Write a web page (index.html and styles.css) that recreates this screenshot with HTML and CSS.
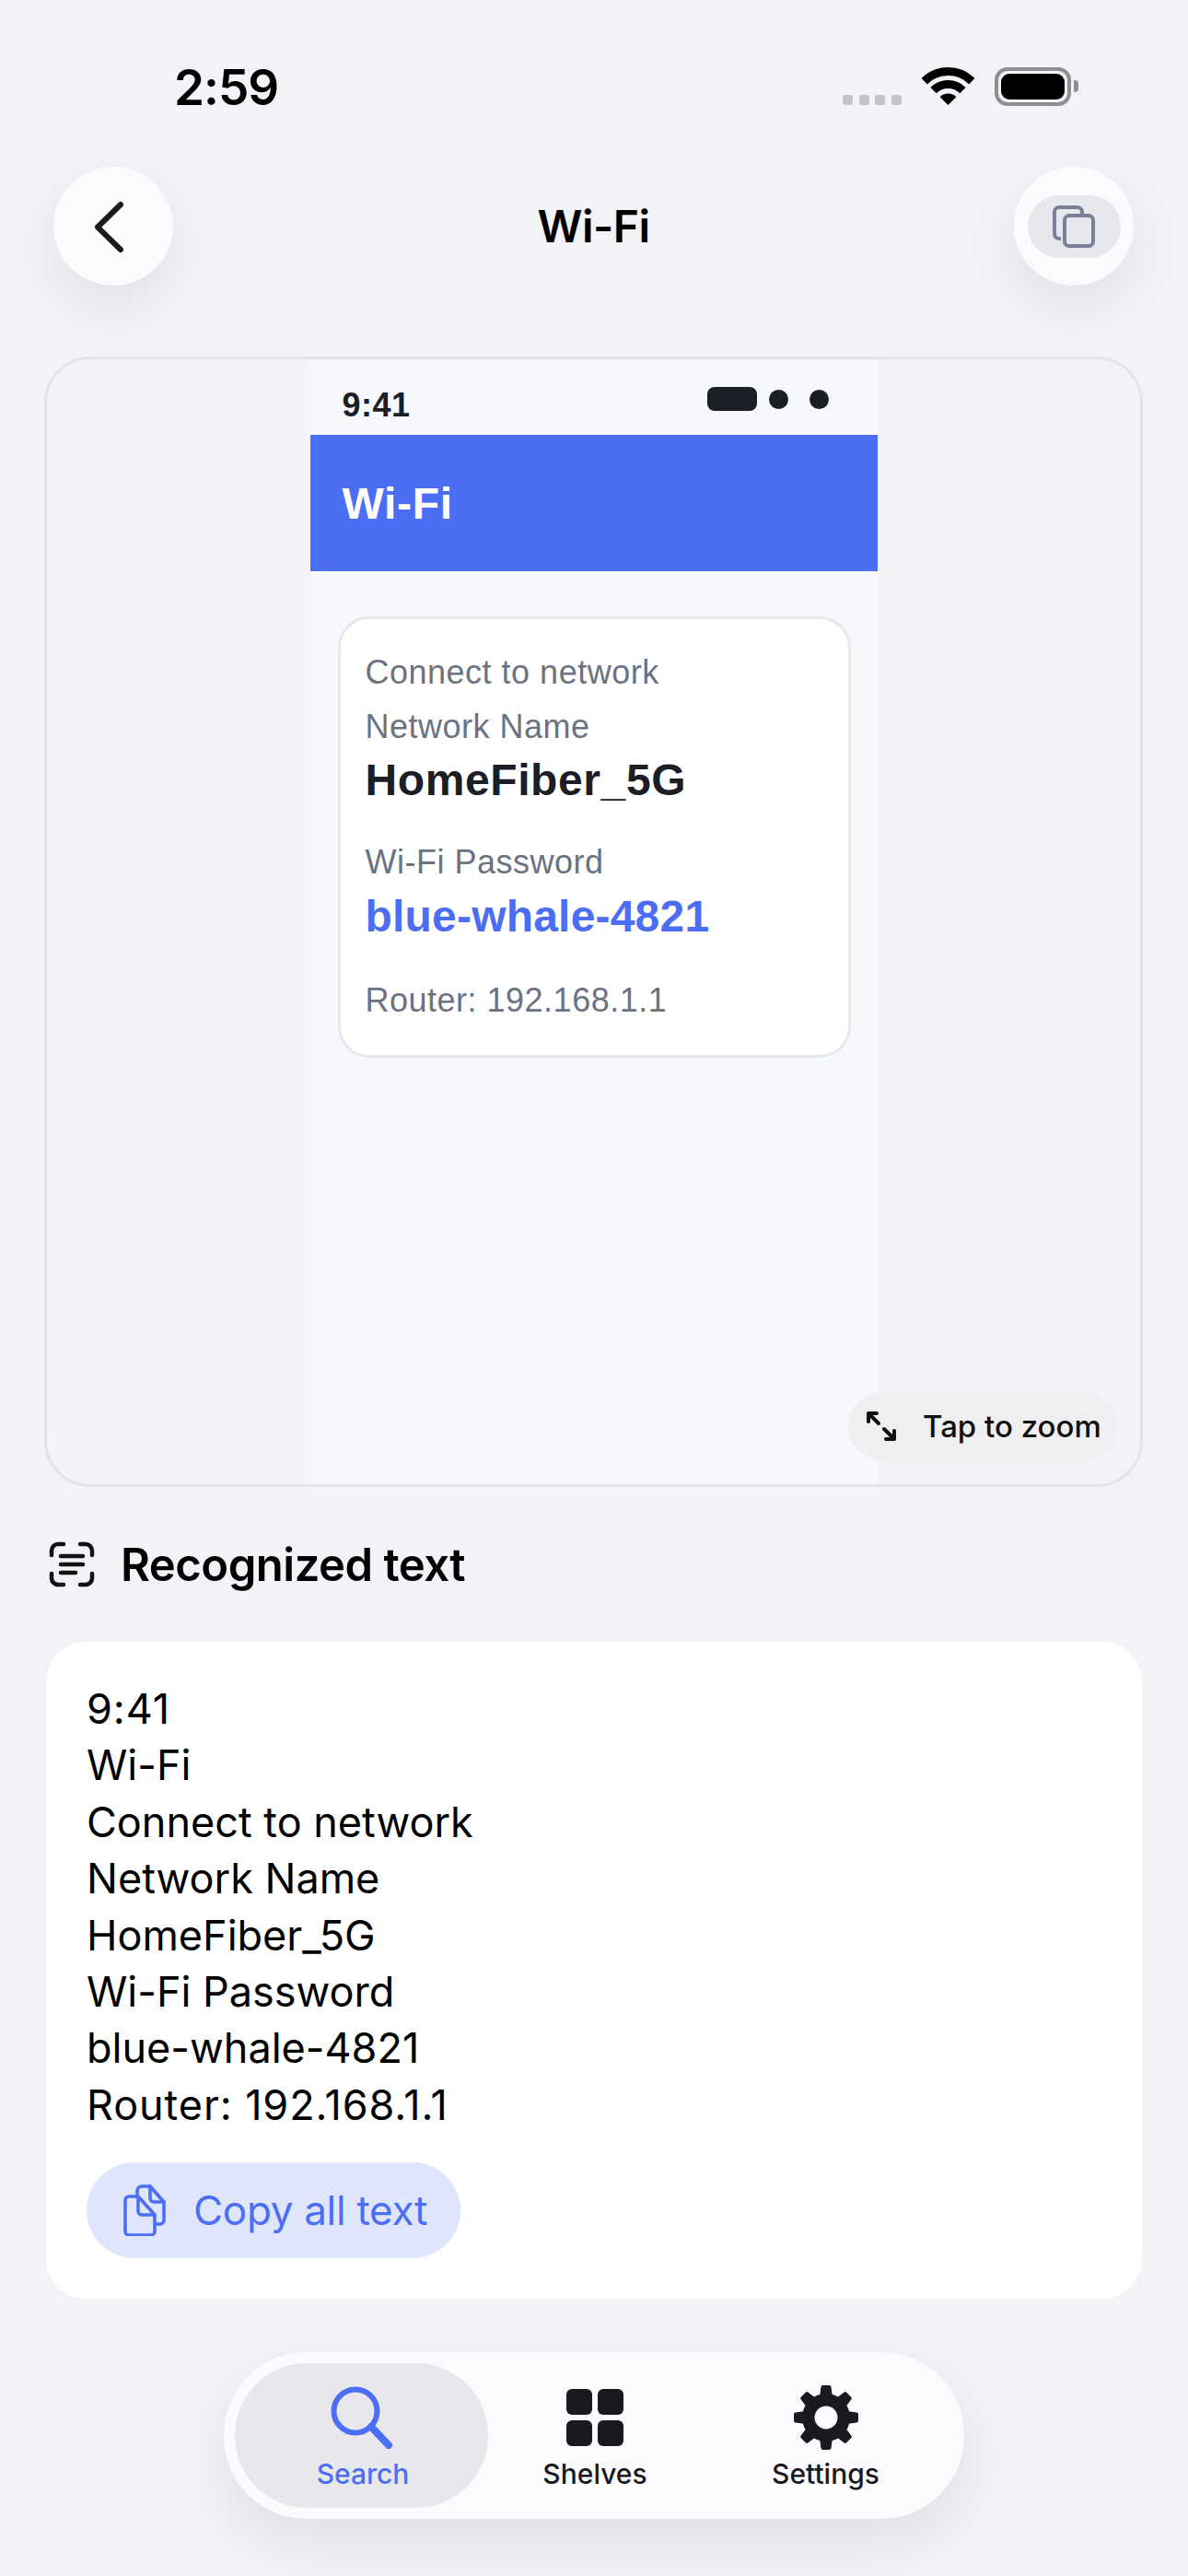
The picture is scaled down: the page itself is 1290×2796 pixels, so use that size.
FILE: index.html
```html
<!DOCTYPE html>
<html lang="en">
<head>
  <meta charset="UTF-8" />
  <title>Wi-Fi</title>
  <link rel="stylesheet" href="styles.css">
</head>
<body>
<div class="page">

  <div class="statusBar">
    <span class="clock">2:59</span>
    <div class="statusIcons">
      <div class="signal"><i></i><i></i><i></i><i></i></div>
      <svg class="wifi" width="57" height="41" viewBox="0 0 57 41">
        <path d="M2.7 15.2A36.5 36.5 0 0 1 54.3 15.2" fill="none" stroke="#000" stroke-width="9"/>
        <path d="M12.6 25.1A22.5 22.5 0 0 1 44.4 25.1" fill="none" stroke="#000" stroke-width="9"/>
        <path d="M28.5 41L19.66 32.16A12.5 12.5 0 0 1 37.34 32.16Z" fill="#000"/>
      </svg>
      <div class="battery"><div class="batteryFill"></div></div>
      <div class="batteryCap"></div>
    </div>
  </div>

  <div class="navBar">
    <button class="roundBtn">
      <svg width="130" height="129" viewBox="0 0 130 129">
        <path d="M73 41L48 65.5L73 90" fill="none" stroke="#1c1c1e" stroke-width="6" stroke-linecap="round" stroke-linejoin="round"/>
      </svg>
    </button>
    <h1 class="navTitle">Wi-Fi</h1>
    <button class="roundBtn">
      <span class="copyPill">
        <svg width="46" height="46" viewBox="0 0 46 46" fill="none" stroke="#7b8098" stroke-width="4">
          <path d="M9 36H7a5 5 0 0 1-5-5V7a5 5 0 0 1 5-5h20a5 5 0 0 1 5 5v3"/>
          <rect x="13" y="11" width="31" height="33" rx="5"/>
        </svg>
      </span>
    </button>
  </div>

  <div class="preview">
    <div class="shot">
      <div class="shotStatus">
        <span class="shotClock">9:41</span>
        <div class="shotIcons"><i class="shotPill"></i><i class="shotDot"></i><i class="shotDot shotDotLast"></i></div>
      </div>
      <div class="shotHeader">Wi-Fi</div>
      <div class="shotCard">
        <div class="shotLabel">Connect to network</div>
        <div class="shotLabel lblName">Network Name</div>
        <div class="shotValue valName">HomeFiber_5G</div>
        <div class="shotLabel lblPass">Wi-Fi Password</div>
        <div class="shotValue valPass">blue-whale-4821</div>
        <div class="shotLabel lblRouter">Router: 192.168.1.1</div>
      </div>
    </div>
    <div class="zoomChip">
      <svg width="34" height="34" viewBox="0 0 34 34" fill="none" stroke="#111" stroke-width="4" stroke-linecap="round" stroke-linejoin="round">
        <path d="M3 12V3H12M3 3L14 14"/>
        <path d="M31 22V31H22M31 31L20 20"/>
      </svg>
      <span>Tap to zoom</span>
    </div>
  </div>

  <div class="sectionHead">
    <svg width="50" height="50" viewBox="0 0 50 50" fill="none" stroke="#111" stroke-width="4.5" stroke-linecap="round" stroke-linejoin="round">
      <path d="M3 15V10a7 7 0 0 1 7-7h6M34 3h6a7 7 0 0 1 7 7v5M47 35v5a7 7 0 0 1-7 7h-6M16 47h-6a7 7 0 0 1-7-7v-5"/>
      <path d="M13 16H37M13 25H37M13 34H29"/>
    </svg>
    <h2>Recognized text</h2>
  </div>

  <div class="textCard">
    <div class="ocrLine ocrNum">9:41</div>
    <div class="ocrLine">Wi-Fi</div>
    <div class="ocrLine">Connect to network</div>
    <div class="ocrLine">Network Name</div>
    <div class="ocrLine">HomeFiber_5G</div>
    <div class="ocrLine">Wi-Fi Password</div>
    <div class="ocrLine">blue-whale-4821</div>
    <div class="ocrLine ocrNum">Router: 192.168.1.1</div>
    <button class="copyAllBtn">
      <svg width="46" height="56" viewBox="0 0 46 56" fill="none" stroke="#4c6ef5" stroke-width="3.6" stroke-linejoin="round" stroke-linecap="round">
        <path d="M15 11V7a5 5 0 0 1 5-5h9l15 17v20a4 4 0 0 1-4 4h-6"/>
        <path d="M29 2v13a4 4 0 0 0 4 4h11"/>
        <path d="M2 17a4 4 0 0 1 4-4h10l18 20v18a4 4 0 0 1-4 4H6a4 4 0 0 1-4-4Z"/>
        <path d="M16 13v16a4 4 0 0 0 4 4h14"/>
      </svg>
      <span>Copy all text</span>
    </button>
  </div>

  <div class="tabBar">
    <div class="tab tabActive">
      <div class="tabIcon">
        <svg width="68" height="68" viewBox="0 0 68 68" fill="none" stroke="#4c6ef5" stroke-linecap="round">
          <circle cx="27" cy="27" r="23.5" stroke-width="6"/>
          <path d="M44 44L63 64" stroke-width="8"/>
        </svg>
      </div>
      <span class="tabLabelActive">Search</span>
    </div>
    <div class="tab">
      <div class="tabIcon">
        <div class="gridIcon"><i></i><i></i><i></i><i></i></div>
      </div>
      <span>Shelves</span>
    </div>
    <div class="tab">
      <div class="tabIcon">
        <svg width="72" height="72" viewBox="0 0 72 72" fill="#1a1a1e">
          <circle cx="36" cy="36" r="26"/>
          <g stroke="#1a1a1e" stroke-width="4" stroke-linejoin="round">
            <path d="M31 14L32.5 3H39.5L41 14Z"/>
            <path d="M31 14L32.5 3H39.5L41 14Z" transform="rotate(45 36 36)"/>
            <path d="M31 14L32.5 3H39.5L41 14Z" transform="rotate(90 36 36)"/>
            <path d="M31 14L32.5 3H39.5L41 14Z" transform="rotate(135 36 36)"/>
            <path d="M31 14L32.5 3H39.5L41 14Z" transform="rotate(180 36 36)"/>
            <path d="M31 14L32.5 3H39.5L41 14Z" transform="rotate(225 36 36)"/>
            <path d="M31 14L32.5 3H39.5L41 14Z" transform="rotate(270 36 36)"/>
            <path d="M31 14L32.5 3H39.5L41 14Z" transform="rotate(315 36 36)"/>
          </g>
          <circle cx="36" cy="36" r="12.5" fill="#fbfbfe"/>
        </svg>
      </div>
      <span>Settings</span>
    </div>
  </div>

</div>
</body>
</html>
```

FILE: styles.css
```css
* { box-sizing: border-box; }
body { margin: 0; background: #f2f2f7; font-family: Inter, "Noto Sans", sans-serif; color: #000; }
button { border: none; padding: 0; font-family: inherit; }
h1, h2 { margin: 0; }
i { display: block; }

.page { width: 1290px; height: 2796px; overflow: hidden; }

/* status bar */
.statusBar { height: 181px; padding: 65px 119px 0 189px; display: flex; justify-content: space-between; align-items: flex-start; }
.clock { font-size: 53px; line-height: 60px; font-weight: 600; letter-spacing: -1px; }
.statusIcons { display: flex; align-items: flex-end; margin-top: 8px; }
.signal { display: flex; gap: 6.6px; margin-right: 22px; }
.signal i { width: 11px; height: 11px; border-radius: 3px; background: #c2c2c8; }
.wifi { margin-right: 22px; }
.battery { width: 83px; height: 42px; border: 4px solid #8e8e93; border-radius: 14px; padding: 3px; margin-bottom: -1px; }
.batteryFill { width: 100%; height: 100%; background: #000; border-radius: 9px; }
.batteryCap { width: 5px; height: 13px; background: #8e8e93; border-radius: 0 4px 4px 0; margin: 0 0 14px 3px; }

/* nav */
.navBar { height: 129px; padding: 0 59px 0 58px; display: flex; justify-content: space-between; align-items: center; }
.roundBtn { width: 130px; height: 129px; border-radius: 50%; background: #fbfbfe; box-shadow: 0 22px 55px rgba(0,0,0,.07); display: flex; align-items: center; justify-content: center; }
.navTitle { font-size: 48px; font-weight: 600; letter-spacing: -.5px; }
.copyPill { width: 101px; height: 68px; margin-left: 1px; border-radius: 34px; background: #e7e8ed; display: flex; align-items: center; justify-content: center; }

/* preview */
.preview { position: relative; height: 1227px; margin: 77px 49px 0 48px; border: 3px solid #e3e3e8; border-radius: 50px; overflow: hidden; }
.shot { width: 616px; height: 100%; margin: 0 auto; background: #f7f8fc; font-family: "Liberation Sans", Arial, sans-serif; }
.shotStatus { height: 82px; padding: 29px 53px 0 35px; display: flex; justify-content: space-between; align-items: flex-start; }
.shotClock { font-size: 36px; line-height: 42px; font-weight: 700; color: #1c1e26; letter-spacing: .5px; }
.shotIcons { display: flex; align-items: center; margin-top: 1px; }
.shotPill { width: 54px; height: 26px; border-radius: 8px; background: #1c1e26; }
.shotDot { width: 21px; height: 21px; border-radius: 50%; background: #1c1e26; margin-left: 13px; }
.shotDotLast { margin-left: 23px; }
.shotHeader { height: 148px; padding-left: 35px; background: #4c6ef5; color: #fff; font-size: 48px; font-weight: 700; letter-spacing: .7px; display: flex; align-items: center; }
.shotCard { margin: 49px 29px 0 30px; padding: 37px 26px 37px 27px; height: 479px; background: #fff; border: 3px solid #e6e8f0; border-radius: 34px; }
.shotLabel { font-size: 36px; line-height: 42px; letter-spacing: .5px; color: #6b7280; }
.shotValue { font-size: 48px; line-height: 56px; font-weight: 700; letter-spacing: .6px; color: #1c1e26; }
.lblName { margin-top: 17px; }
.valName { margin-top: 9px; }
.lblPass { margin-top: 40px; }
.valPass { margin-top: 10px; letter-spacing: .2px; color: #4c6ef5; }
.lblRouter { margin-top: 42px; }

.zoomChip { position: absolute; right: 25px; bottom: 26px; width: 292px; height: 74px; padding-left: 19px; border-radius: 37px; background: #efeff1; display: flex; align-items: center; gap: 28px; font-size: 33px; font-weight: 500; color: #111; }

/* recognized text */
.sectionHead { height: 168px; padding-left: 53px; display: flex; align-items: center; gap: 28px; }
.sectionHead h2 { font-size: 49px; font-weight: 600; letter-spacing: -.5px; }

.textCard { margin: 0 50px; height: 713px; padding: 42px 44px 0; background: #fff; border-radius: 42px; }
.ocrLine { font-size: 45px; line-height: 61.4px; }
.ocrNum { letter-spacing: .9px; }
.copyAllBtn { margin-top: 32px; width: 406px; height: 104px; padding-left: 40px; border-radius: 52px; background: #dfe5fb; display: flex; align-items: center; gap: 30px; color: #4c6ef5; font-size: 44px; letter-spacing: -.3px; }

/* tabs */
.tabBar { width: 804px; height: 181px; margin: 58px 0 0 243px; padding: 12px; border-radius: 90px; background: #fbfbfe; box-shadow: 0 25px 60px rgba(0,0,0,.08); display: grid; grid-template-columns: 275px 232px 269px; }
.tab { height: 157px; padding-top: 23px; display: flex; flex-direction: column; align-items: center; font-size: 30px; font-weight: 500; color: #1a1a1e; }
.tab span { margin-top: 8px; line-height: 36px; }
.tabActive { background: #e8e8ec; border-radius: 78px; color: #4c6ef5; }
.tab .tabLabelActive { margin-left: 3px; }
.tabIcon { height: 71px; display: flex; align-items: center; justify-content: center; }
.gridIcon { width: 62px; height: 62px; display: grid; grid-template-columns: 1fr 1fr; gap: 6px; }
.gridIcon i { background: #1a1a1e; border-radius: 6px; }
```
